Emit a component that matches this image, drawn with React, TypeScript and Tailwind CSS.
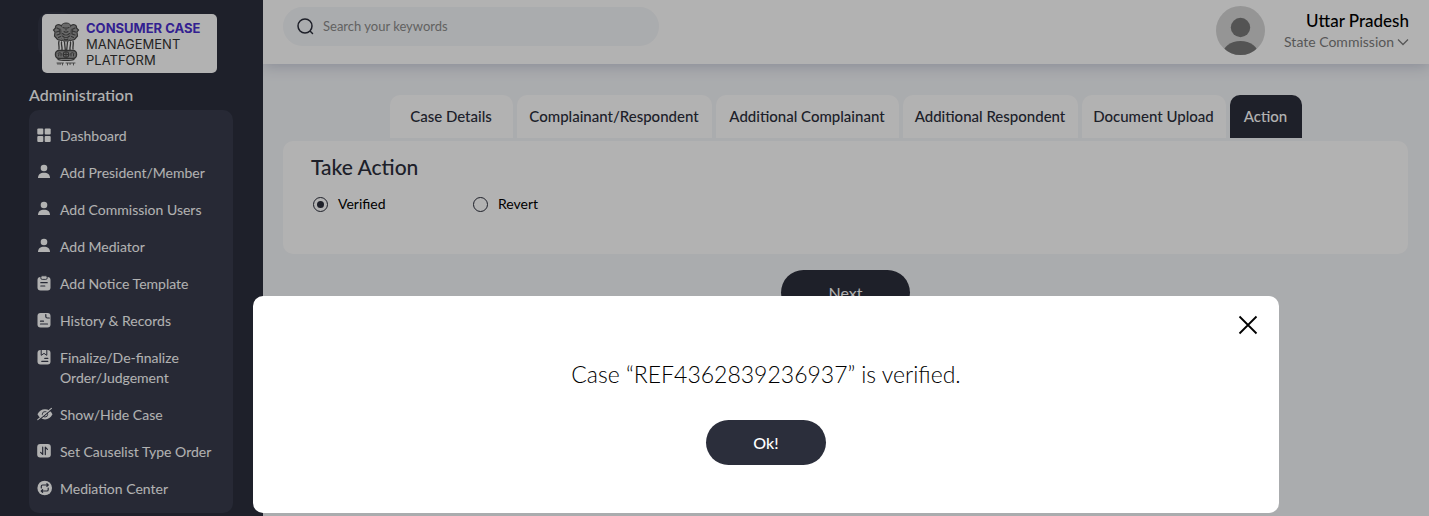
import { useState, type ReactNode } from "react";

type MenuItem = { label: string; icon: ReactNode };

const cut = "#383c4d";

const userIcon = (
  <svg width="14" height="16" viewBox="0 0 14 16" fill="currentColor" aria-hidden="true">
    <circle cx="7" cy="4" r="3.3" />
    <path d="M1 14c0-3.400 2.400-5.200 6-5.200s6 1.800 6 5.200z" />
  </svg>
);

const menu: MenuItem[] = [
  {
    label: "Dashboard",
    icon: (
      <svg width="14" height="16" viewBox="0 0 14 16" fill="currentColor" aria-hidden="true">
        <rect x="0.3" y="1.5" width="6" height="6" rx="1" />
        <rect x="7.7" y="1.5" width="6" height="6" rx="1" />
        <rect x="0.3" y="8.9" width="6" height="6" rx="1" />
        <rect x="7.7" y="8.9" width="6" height="6" rx="1" />
      </svg>
    ),
  },
  { label: "Add President/Member", icon: userIcon },
  { label: "Add Commission Users", icon: userIcon },
  { label: "Add Mediator", icon: userIcon },
  {
    label: "Add Notice Template",
    icon: (
      <svg width="14" height="16" viewBox="0 0 14 16" aria-hidden="true">
        <rect x="0.5" y="2" width="13" height="13.5" rx="3" fill="currentColor" />
        <rect x="3.8" y="0.8" width="6.4" height="3.6" rx="1.4" fill="currentColor" stroke={cut} strokeWidth="0.9" />
        <path d="M3.8 7.7h6.4M3.8 11h4" stroke={cut} strokeWidth="1.2" strokeLinecap="round" />
      </svg>
    ),
  },
  {
    label: "History & Records",
    icon: (
      <svg width="14" height="16" viewBox="0 0 14 16" aria-hidden="true">
        <rect x="0.5" y="1" width="13" height="14.5" rx="3" fill="currentColor" />
        <path d="M8.800 2.600v1.900a1.500 1.500 0 0 0 1.500 1.500h2" fill="none" stroke={cut} strokeWidth="1.2" strokeLinecap="round" />
        <path d="M3.5 9.2h3M3.5 12h7" stroke={cut} strokeWidth="1.2" strokeLinecap="round" />
      </svg>
    ),
  },
  {
    label: "Finalize/De-finalize Order/Judgement",
    icon: (
      <svg width="14" height="16" viewBox="0 0 14 16" aria-hidden="true">
        <rect x="0.5" y="1" width="13" height="14.5" rx="3" fill="currentColor" />
        <path d="M4.2 1v5.3L7 4.4l2.8 1.9V1" fill="none" stroke={cut} strokeWidth="1" />
        <path d="M7.8 9.4h3M4.8 12.4h6" stroke={cut} strokeWidth="1.2" strokeLinecap="round" />
      </svg>
    ),
  },
  {
    label: "Show/Hide Case",
    icon: (
      <svg width="16" height="16" viewBox="0 0 16 16" aria-hidden="true">
        <path d="M0.500 8.300C2.200 4.800 4.800 3.200 8 3.200s5.800 1.600 7.500 5.100C13.800 11.800 11.200 13.400 8 13.400S2.200 11.800.5 8.300z" fill="currentColor" />
        <circle cx="8" cy="8.300" r="2.700" fill="none" stroke={cut} strokeWidth="0.900" />
        <path d="M1.600 14.200L14.800 3.400" stroke={cut} strokeWidth="1.100" />
        <path d="M0.800 13.600L14.400 2.400" stroke="currentColor" strokeWidth="1.200" strokeLinecap="round" />
      </svg>
    ),
  },
  {
    label: "Set Causelist Type Order",
    icon: (
      <svg width="14" height="16" viewBox="0 0 14 16" aria-hidden="true">
        <rect x="0.2" y="1" width="13.600" height="13.600" rx="3" fill="currentColor" />
        <path d="M5.700 4v7.400L3.600 9.300M8.300 11.600V4.200l2.100 2.100" fill="none" stroke={cut} strokeWidth="1.200" strokeLinecap="round" strokeLinejoin="round" />
      </svg>
    ),
  },
  {
    label: "Mediation Center",
    icon: (
      <svg width="16" height="16" viewBox="0 0 16 16" aria-hidden="true">
        <circle cx="7.700" cy="8" r="7.300" fill="currentColor" />
        <path d="M4.300 8V6.300a1.300 1.300 0 0 1 1.300-1.300h5.600M9.900 3.700L11.300 5l-1.400 1.300M11.200 8v1.700a1.300 1.300 0 0 1-1.300 1.300H4.300M5.600 9.700L4.200 11l1.400 1.300" fill="none" stroke={cut} strokeWidth="1.200" strokeLinecap="round" strokeLinejoin="round" />
      </svg>
    ),
  },
];

const tabs = [
  { label: "Case Details", width: "w-[123px]" },
  { label: "Complainant/Respondent", width: "w-[195px]" },
  { label: "Additional Complainant", width: "w-[183px]" },
  { label: "Additional Respondent", width: "w-[175px]" },
  { label: "Document Upload", width: "w-[144px]" },
  { label: "Action", width: "w-[72px]" },
];

function Emblem() {
  return (
    <svg width="28" height="44" viewBox="0 0 28 44" fill="none" stroke="#4a4a4a" strokeLinecap="round" aria-hidden="true">
      <path d="M10 2.500c1-2 7-2 8 0l1.500 4-1 4 1 5-2.500 3.500h-6L8.500 15.500l1-5-1-4z" fill="#999" strokeWidth="1" />
      <path d="M9.500 4C6 1.500 3 3 3.500 6L1.500 8l1.500 2-.5 4 3 3.500 4 1M18.500 4c3.500-2.500 6.500-1 6 2l2 2-1.500 2 .5 4-3 3.500-4 1" fill="#999" strokeWidth="1.200" />
      <path d="M11 5.500l1.500.5M17 5.500l-1.500.5M14 5.500v2.500M12 9.500c1.300 1 2.700 1 4 0M10.500 11.500c2 2 5 2 7 0M10.500 14c2 2 5 2 7 0M12 17c1.300 1 2.700 1 4 0" strokeWidth="1.100" />
      <path d="M5 6l2 1M23 6l-2 1M4.500 10l3-1M23.500 10l-3-1M5 13l3-1M23 13l-3-1M6.500 15.500l2-1M21.500 15.500l-2-1M8 7v5M20 7v5" strokeWidth="1.200" />
      <path d="M7 19c-1 3 .5 5 0 8M9.500 20c-.5 3 1 5 .5 8M12.500 20l.8 8M15.500 20l-.8 8M18.500 20c.5 3-1 5-.5 8M21 19c1 3-.5 5 0 8" strokeWidth="1.300" />
      <rect x="3.500" y="28.500" width="21" height="8" rx="3.500" fill="#999" strokeWidth="1.400" />
      <circle cx="14" cy="32.500" r="2.800" strokeWidth="1.100" />
      <path d="M14 30v5M11.500 32.500h5M6 31.500c1-1.500 3-1 3.500.5M6.500 34l.5-2M9 34v-2M18.500 32c.5-1.500 2.500-2 3.500-.5M19 34v-2M21.500 34v-2" strokeWidth="1" />
      <path d="M6 37.500c3 1.200 13 1.200 16 0" strokeWidth="1.200" />
      <path d="M5 41h6.500M14 41h9M6 41.500v1M8 41.500c1 0 1 1 0 1M10.500 41.500v1.500M15.500 41.500v1.500M18 41.500c1 0 1 1 0 1M21.500 41.500v1.500" strokeWidth="0.800" />
    </svg>
  );
}

function Sidebar() {
  return (
    <aside className="relative z-10 flex w-[263px] shrink-0 flex-col bg-[#2c2f3d] pt-[14px] pb-[3px] text-white">
      <span className="absolute top-3 left-[38px] h-[46px] w-9 rounded-[12px] bg-[#333646]" />
      <a href="#home" className="relative ml-[42px] flex h-[59px] w-[175px] items-center rounded-[5px] bg-white pl-[10px]">
        <Emblem />
        <span className="ml-[6px] flex flex-col font-[Inter,sans-serif] text-[13px] leading-4 text-[#333]">
          <strong className="font-bold whitespace-nowrap text-[#4a2fd0]">CONSUMER CASE</strong>
          <span>MANAGEMENT</span>
          <span>PLATFORM</span>
        </span>
      </a>
      <h2 className="mt-[12px] ml-[29px] text-[16px] leading-5 font-medium">Administration</h2>
      <nav aria-label="Administration" className="mx-[29px] mt-[5px] w-[204px] flex-1 rounded-[10px] bg-[#383c4d] pt-4 pb-3">
        <ul className="flex flex-col gap-[17px]">
          {menu.map((item) => (
            <li key={item.label}>
              <a href="#menu" className="flex pl-2 text-[14px] leading-5">
                <span className="mt-px w-[23px] shrink-0">{item.icon}</span>
                <span className="w-[165px]">{item.label}</span>
              </a>
            </li>
          ))}
        </ul>
      </nav>
    </aside>
  );
}

function Header() {
  return (
    <header className="flex h-16 items-start justify-between bg-white pr-5 pl-5 shadow-[0_2px_14px_#c3c7d6]">
      <label className="mt-[7px] flex h-[39px] w-[376px] items-center rounded-full bg-[#f4f6f9] pl-[14px]">
        <svg width="17" height="17" viewBox="0 0 17 17" fill="none" stroke="#2b2e3b" strokeWidth="1.500" strokeLinecap="round" aria-hidden="true">
          <circle cx="8" cy="8" r="7" />
          <path d="M13.500 13.500l2 2" />
        </svg>
        <input
          type="search"
          aria-label="Search"
          placeholder="Search your keywords"
          className="ml-[9px] min-w-0 flex-1 bg-transparent text-[13px] outline-none placeholder:text-[#8c8c8c]"
        />
      </label>
      <div className="mt-[6px] flex gap-4">
        <svg width="49" height="49" viewBox="0 0 49 49" aria-hidden="true">
          <defs>
            <clipPath id="avatar">
              <circle cx="24.500" cy="24.500" r="24.500" />
            </clipPath>
          </defs>
          <g clipPath="url(#avatar)">
            <rect width="49" height="49" fill="#d6d6d6" />
            <circle cx="24.500" cy="21.500" r="9.700" fill="#797979" />
            <ellipse cx="24.500" cy="49" rx="18" ry="14" fill="#797979" />
          </g>
        </svg>
        <div className="flex w-32 flex-col items-end pt-1">
          <span className="text-[17px] leading-[22px] font-medium text-black">Uttar Pradesh</span>
          <button type="button" className="flex items-center gap-[3px] text-[14px] leading-5 whitespace-nowrap text-[#7d7d7d]">
            State Commission
            <svg width="12" height="8" viewBox="0 0 12 8" fill="none" stroke="currentColor" strokeWidth="1.300" aria-hidden="true">
              <path d="M1 1.500l5 5 5-5" />
            </svg>
          </button>
        </div>
      </div>
    </header>
  );
}

const radioClass =
  "grid size-[15px] appearance-none place-content-center rounded-full border border-[#2b2e3b] before:size-[7px] before:rounded-full checked:before:bg-[#2b2e3b]";

export default function App() {
  const [choice, setChoice] = useState("Verified");
  const [open, setOpen] = useState(true);

  return (
    <div className="flex min-h-screen bg-[#f4f6f9] font-[Lato,sans-serif] text-[#2b2e3b]">
      <Sidebar />
      <div className="flex min-w-0 flex-1 flex-col">
        <Header />
        <main className="flex flex-col pt-[31px] pr-[21px] pl-5">
          <div role="tablist" className="flex justify-center gap-1">
            {tabs.map((tab) => (
              <button
                key={tab.label}
                type="button"
                role="tab"
                aria-selected={tab.label === "Action"}
                className={`h-[43px] rounded-t-[10px] text-[15px] font-medium whitespace-nowrap ${tab.width} ${
                  tab.label === "Action" ? "bg-[#2b2e3b] text-white" : "bg-white"
                }`}
              >
                {tab.label}
              </button>
            ))}
          </div>
          <section className="mt-[3px] h-[113px] rounded-[10px] bg-white px-7 pt-3">
            <h1 className="text-[21px] leading-7 font-medium">Take Action</h1>
            <div className="mt-[13px] flex text-[14px] leading-5 text-black">
              {["Verified", "Revert"].map((name) => (
                <label key={name} className="flex w-40 items-center gap-[10px] pl-[2px]">
                  <input
                    type="radio"
                    name="decision"
                    checked={choice === name}
                    onChange={() => setChoice(name)}
                    className={radioClass}
                  />
                  {name}
                </label>
              ))}
            </div>
          </section>
          <button
            type="button"
            onClick={() => setOpen(true)}
            className="mt-4 h-[45px] w-[129px] self-center rounded-full bg-[#2b2e3b] text-[16px] text-white"
          >
            Next
          </button>
        </main>
      </div>

      {open && (
        <div className="fixed inset-0 z-20 flex items-end bg-black/30 pr-[150px] pb-[3px] pl-[253px]">
          <div
            role="dialog"
            aria-modal="true"
            aria-labelledby="dialog-title"
            className="flex flex-1 flex-col items-center rounded-[10px] bg-white pt-[19px] pb-12 text-black"
          >
            <button type="button" aria-label="Close" onClick={() => setOpen(false)} className="mr-[21px] self-end">
              <svg width="20" height="20" viewBox="0 0 20 20" fill="none" stroke="currentColor" strokeWidth="1.800" aria-hidden="true">
                <path d="M1.500 1.500l17 17M18.500 1.500l-17 17" />
              </svg>
            </button>
            <p id="dialog-title" className="mt-[23px] text-[23px] leading-8 font-light">
              Case “REF4362839236937” is verified.
            </p>
            <button
              type="button"
              onClick={() => setOpen(false)}
              className="mt-[30px] h-[45px] w-[120px] rounded-full bg-[#2b2e3b] text-[16px] font-medium text-white"
            >
              Ok!
            </button>
          </div>
        </div>
      )}
    </div>
  );
}
